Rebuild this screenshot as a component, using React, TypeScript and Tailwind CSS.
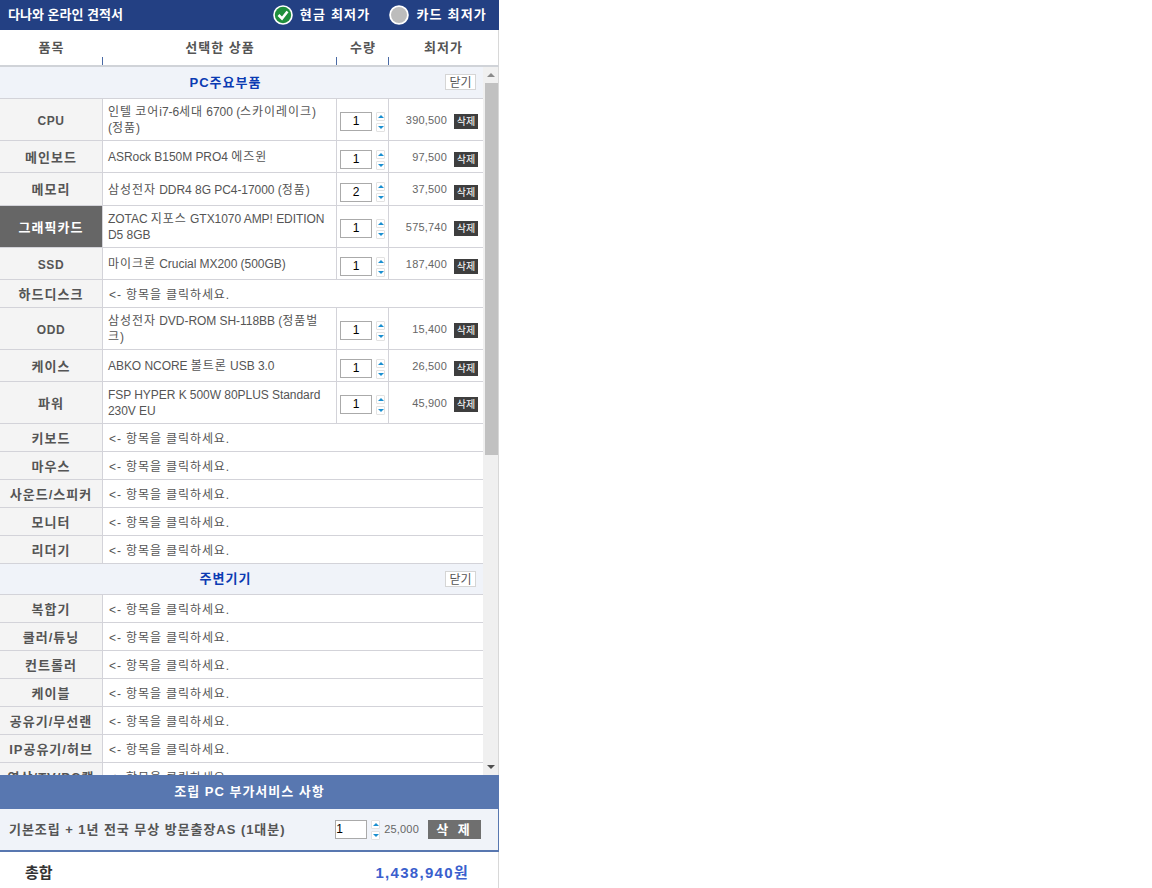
const font = "font-['Liberation_Sans','Noto_Sans_CJK_KR',sans-serif]";

type Row = { label: string; h: string; name?: string; qty?: number; price?: string; active?: boolean };

const mainRows: Row[] = [
  { label: 'CPU', h: 'h-[42px]', name: '인텔 코어i7-6세대 6700 (스카이레이크)\n(정품)', qty: 1, price: '390,500' },
  { label: '메인보드', h: 'h-[32px]', name: 'ASRock B150M PRO4 에즈윈', qty: 1, price: '97,500' },
  { label: '메모리', h: 'h-[33px]', name: '삼성전자 DDR4 8G PC4-17000 (정품)', qty: 2, price: '37,500' },
  { label: '그래픽카드', h: 'h-[42px]', name: 'ZOTAC 지포스 GTX1070 AMP! EDITION\nD5 8GB', qty: 1, price: '575,740', active: true },
  { label: 'SSD', h: 'h-[32px]', name: '마이크론 Crucial MX200 (500GB)', qty: 1, price: '187,400' },
  { label: '하드디스크', h: 'h-[28px]' },
  { label: 'ODD', h: 'h-[42px]', name: '삼성전자 DVD-ROM SH-118BB (정품벌\n크)', qty: 1, price: '15,400' },
  { label: '케이스', h: 'h-[32px]', name: 'ABKO NCORE 볼트론 USB 3.0', qty: 1, price: '26,500' },
  { label: '파워', h: 'h-[42px]', name: 'FSP HYPER K 500W 80PLUS Standard\n230V EU', qty: 1, price: '45,900' },
  { label: '키보드', h: 'h-[28px]' },
  { label: '마우스', h: 'h-[28px]' },
  { label: '사운드/스피커', h: 'h-[28px]' },
  { label: '모니터', h: 'h-[28px]' },
  { label: '리더기', h: 'h-[28px]' },
];

const subRows: Row[] = ['복합기', '쿨러/튜닝', '컨트롤러', '케이블', '공유기/무선랜', 'IP공유기/허브', '영상/TV/PC캠'].map((label) => ({
  label,
  h: 'h-[28px]',
}));

// hangul runs sit wider than latin in the original, so space them apart
function ProductName({ name }: { name: string }) {
  return (
    <span className="tracking-[-0.05px]">
      {name.split(/([가-힣]+)/).map((part, i) =>
        i % 2 ? (
          <span key={i} className="tracking-[0.95px]">
            {part}
          </span>
        ) : (
          part
        ),
      )}
    </span>
  );
}

function Spinner({ className = '' }: { className?: string }) {
  return (
    <div className={`flex flex-col gap-[2px] ${className}`}>
      <span className="w-[9px] h-[9px] border border-[#e2e2e2] rounded-[1px] bg-white flex items-center justify-center">
        <span className="w-0 h-0 border-x-[3px] border-x-transparent border-b-[3px] border-b-[#1a8fd0]" />
      </span>
      <span className="w-[9px] h-[9px] border border-[#e2e2e2] rounded-[1px] bg-white flex items-center justify-center">
        <span className="w-0 h-0 border-x-[3px] border-x-transparent border-t-[3px] border-t-[#1a8fd0]" />
      </span>
    </div>
  );
}

function SectionHead({ title, h }: { title: string; h: string }) {
  return (
    <div className={`${h} relative flex items-center justify-center pr-[32px] bg-[#f0f3f9] border-b border-[#d3d3d9]`}>
      <span className="text-[13px] font-bold text-[#0b3bb3] tracking-[1px]">{title}</span>
      <span className="absolute right-[7px] top-[7px] w-[31px] h-[16px] border border-[#d5d5d5] bg-white text-[12px] leading-[16px] text-center text-[#555555]">
        닫기
      </span>
    </div>
  );
}

function ItemRow({ row }: { row: Row }) {
  const latin = /^[A-Z]+$/.test(row.label);
  const drop = row.h === 'h-[42px]' ? 'mt-[4px]' : 'mt-[6px]';
  return (
    <div className={`${row.h} flex border-b border-[#d3d3d9]`}>
      <div
        className={`w-[103px] shrink-0 flex items-center justify-center pt-[2px] font-bold border-r border-[#d3d3d9] ${
          latin ? 'text-[12px] tracking-[0.6px]' : 'text-[13px] tracking-[1px]'
        } ${row.active ? 'bg-[#666666] text-white' : 'bg-[#f4f4f4] text-[#555555]'}`}
      >
        {row.label}
      </div>
      {row.name ? (
        <>
          <div className="w-[234px] shrink-0 flex items-center pl-[5px] pt-[1px] text-[12px] leading-[16px] text-[#555555] whitespace-pre-line border-r border-[#d3d3d9]">
            <ProductName name={row.name} />
          </div>
          <div className="w-[52px] shrink-0 flex items-center pl-[3px] gap-[4px] border-r border-[#d3d3d9]">
            <span className={`${drop} w-[32px] h-[19px] border border-[#aaaaaa] text-[12px] leading-[17px] text-center text-black bg-white`}>
              {row.qty}
            </span>
            <Spinner className={drop} />
          </div>
          <div className="flex-1 flex items-center justify-end pr-[5px] gap-[7px]">
            <span className="pt-[1px] text-[11px] tracking-[0.2px] text-[#666666]">{row.price}</span>
            <span className={`${drop} w-[24px] h-[15px] bg-[#3e3e3e] text-white text-[10px] leading-[15px] text-center`}>삭제</span>
          </div>
        </>
      ) : (
        <div className="flex-1 flex items-center pl-[6px] pt-[2px] text-[12px] text-[#555555] tracking-[0.9px]">&lt;- 항목을 클릭하세요.</div>
      )}
    </div>
  );
}

export default function App() {
  return (
    <div className={`${font} w-[499px] h-[888px] overflow-hidden bg-white`}>
      <div className="h-[30px] bg-[#234083] flex items-center pl-[8px] pr-[12px] text-white">
        <span className="text-[13px] font-bold">다나와 온라인 견적서</span>
        <div className="ml-auto flex items-center text-[13px] font-bold tracking-[1.2px]">
          <svg width="20" height="20" viewBox="0 0 20 20">
            <circle cx="10" cy="10" r="9.8" fill="#fff" />
            <circle cx="10" cy="10" r="8.2" fill="#1f8f3c" />
            <path d="M5.5 10 L9 13.5 L14.5 6.5" fill="none" stroke="#fff" strokeWidth="2.6" />
          </svg>
          <span className="ml-[7px]">현금 최저가</span>
          <svg className="ml-[19px]" width="20" height="20" viewBox="0 0 20 20">
            <circle cx="10" cy="10" r="9.8" fill="#fff" />
            <circle cx="10" cy="10" r="8" fill="#bcbcbc" />
          </svg>
          <span className="ml-[7px]">카드 최저가</span>
        </div>
      </div>

      <div className="h-[37px] flex border-b-[2px] border-r border-b-[#d0d3d8] border-r-[#d8d8d8] text-[13px] font-bold text-[#555555] tracking-[1px]">
        {[
          ['품목', 'w-[103px]'],
          ['선택한 상품', 'w-[234px]'],
          ['수량', 'w-[52px]'],
          ['최저가', 'w-[109px]'],
        ].map(([t, w], i) => (
          <div key={t} className={`${w} relative flex items-center justify-center`}>
            {t}
            {i < 3 && <span className="absolute right-0 bottom-0 w-px h-[8px] bg-[#4a6aa5]" />}
          </div>
        ))}
      </div>

      <div className="h-[708px] flex overflow-hidden border-r border-[#d8d8d8]">
        <div className="w-[483px] shrink-0">
          <SectionHead title="PC주요부품" h="h-[32px]" />
          {mainRows.map((r) => (
            <ItemRow key={r.label} row={r} />
          ))}
          <SectionHead title="주변기기" h="h-[31px]" />
          {subRows.map((r) => (
            <ItemRow key={r.label} row={r} />
          ))}
        </div>
        <div className="w-[15px] bg-[#f0f0f0] flex flex-col items-center">
          <span className="mt-[6px] w-0 h-0 border-x-[4px] border-x-transparent border-b-[4px] border-b-[#8a8a8a]" />
          <div className="mt-[6px] w-[13px] h-[372px] self-end bg-[#c1c1c1]" />
          <span className="mt-auto mb-[6px] w-0 h-0 border-x-[4px] border-x-transparent border-t-[4px] border-t-[#505050]" />
        </div>
      </div>

      <div className="h-[34px] bg-[#5877b0] flex items-center justify-center text-white text-[13px] font-bold tracking-[1px]">
        조립 PC 부가서비스 사항
      </div>

      <div className="h-[43px] bg-[#f0f3f9] border-b-2 border-r border-[#5877b0] flex items-center pl-[9px] text-[13px] font-bold text-[#555555] tracking-[0.95px]">
        <span>기본조립 + 1년 전국 무상 방문출장AS (1대분)</span>
        <span className="ml-auto w-[32px] h-[19px] border border-[#aaaaaa] bg-white text-black font-normal text-[12px] leading-[17px] tracking-normal">1</span>
        <Spinner className="ml-[4px]" />
        <span className="ml-[4px] font-normal text-[11px] text-[#666666] tracking-[0.2px]">25,000</span>
        <span className="ml-[9px] mr-[17px] w-[53px] h-[19px] bg-[#6f6f6f] text-white text-center leading-[19px] tracking-[3px]">삭 제</span>
      </div>

      <div className="h-[36px] flex items-center pt-[6px] pl-[25px] pr-[29px] border-r border-[#d8d8d8]">
        <span className="text-[15px] font-bold text-[#333333]">총합</span>
        <span className="ml-auto text-[15px] font-bold text-[#3a5fcd] tracking-[1.3px]">1,438,940원</span>
      </div>
    </div>
  );
}
